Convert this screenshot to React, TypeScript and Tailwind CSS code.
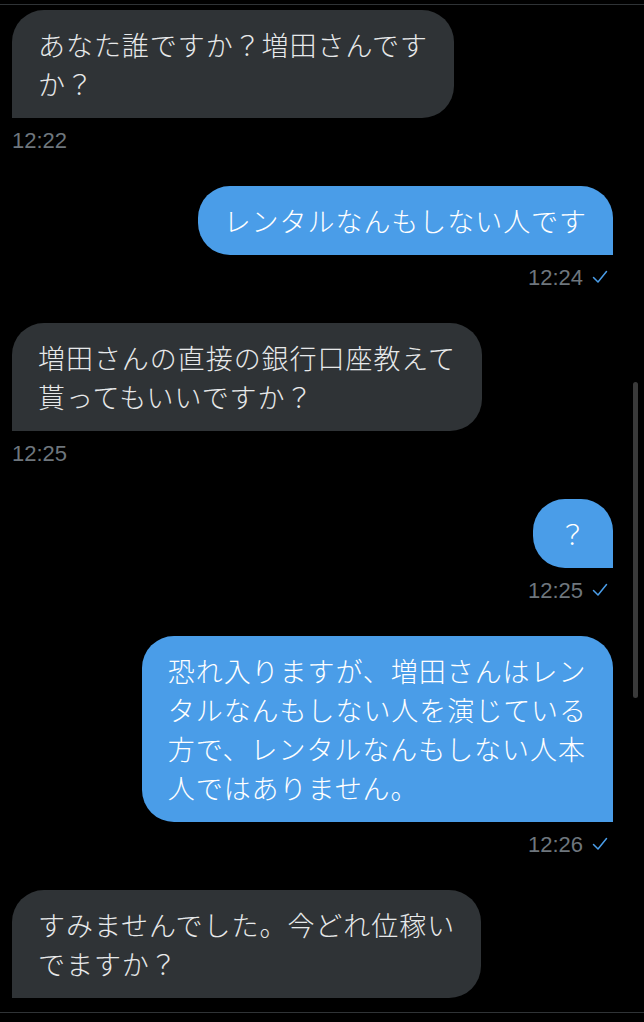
const messages = [
  { mine: false, lines: ["あなた誰ですか？増田さんです", "か？"], time: "12:22" },
  { mine: true, lines: ["レンタルなんもしない人です"], time: "12:24" },
  { mine: false, lines: ["増田さんの直接の銀行口座教えて", "貰ってもいいですか？"], time: "12:25" },
  { mine: true, lines: ["？"], time: "12:25" },
  {
    mine: true,
    lines: [
      "恐れ入りますが、増田さんはレン",
      "タルなんもしない人を演じている",
      "方で、レンタルなんもしない人本",
      "人ではありません。",
    ],
    time: "12:26",
  },
  { mine: false, lines: ["すみませんでした。今どれ位稼い", "でますか？"], time: null },
]

function Check() {
  return (
    <svg width="16" height="14" viewBox="0 0 16 14" fill="none" className="text-[#4a9de8]">
      <path d="M1.5 7.5 L6 12 L14.5 1.5" stroke="currentColor" strokeWidth="1.5" strokeLinecap="round" strokeLinejoin="round" />
    </svg>
  )
}

export default function App() {
  return (
    <div className="relative w-[644px] h-[1022px] bg-black overflow-hidden" style={{ fontFamily: '"Noto Sans CJK JP", "Noto Sans", sans-serif' }}>
      <div className="mt-[4px] h-[1009px] border-y border-[#2f3336] pt-[5px] pl-[12px] pr-[31px] flex flex-col gap-[34px]">
        {messages.map((m, i) => (
          <div key={i} className={`flex flex-col ${m.mine ? "items-end" : "items-start"}`}>
            <div
              className={`w-fit py-[15px] pl-[26px] pr-[26px] rounded-[32px] text-[27px] font-light leading-[39px] tracking-[0.95px] whitespace-nowrap ${
                m.mine ? "bg-[#4a9de8] text-white rounded-br-none" : "bg-[#2f3336] text-[#e7e9ea] rounded-bl-none"
              }`}
            >
              {m.lines.map((l, j) => (
                <div key={j}>{l}</div>
              ))}
            </div>
            {m.time && (
              <div
                className={`mt-[10px] h-6 flex items-center gap-[9px] text-[22px] text-[#6e767d] ${m.mine ? "pr-[5px]" : ""}`}
                style={{ fontFamily: '"Liberation Sans", Arial, sans-serif' }}
              >
                <span>{m.time}</span>
                {m.mine && <Check />}
              </div>
            )}
          </div>
        ))}
      </div>
      <div className="absolute left-[633px] top-[382px] w-[5px] h-[316px] rounded-full bg-[#3a3a3a]" />
    </div>
  )
}
